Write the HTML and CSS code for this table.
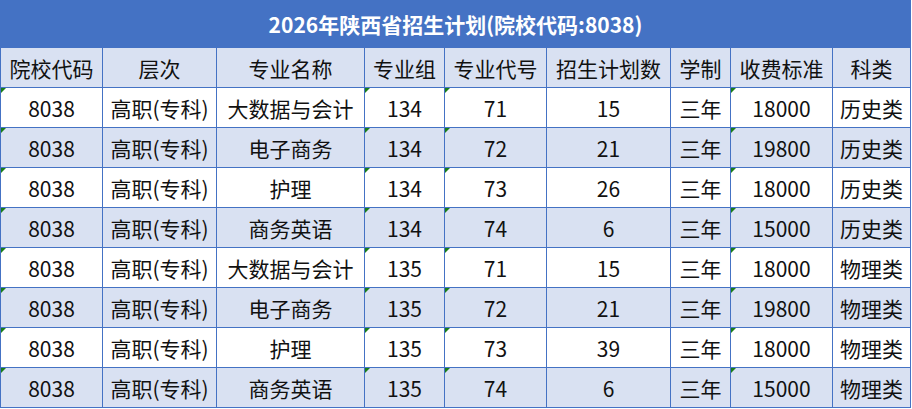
FILE: index.html
```html
<!DOCTYPE html>
<html lang="zh-CN">
<head>
<meta charset="utf-8">
<title>2026年陕西省招生计划</title>
<link rel="stylesheet" href="styles.css">
</head>
<body>
<table class="plan">
  <colgroup>
    <col class="c1"><col class="c2"><col class="c3"><col class="c4"><col class="c5"><col class="c6"><col class="c7"><col class="c8"><col class="c9">
  </colgroup>
  <tr class="title"><td colspan="9">2026年陕西省招生计划(院校代码:8038)</td></tr>
  <tr class="head">
    <td>院校代码</td><td>层次</td><td>专业名称</td><td>专业组</td><td>专业代号</td><td>招生计划数</td><td>学制</td><td>收费标准</td><td>科类</td>
  </tr>
  <tr><td class="t">8038</td><td>高职(专科)</td><td>大数据与会计</td><td class="t">134</td><td class="t">71</td><td>15</td><td>三年</td><td class="t">18000</td><td>历史类</td></tr>
  <tr class="alt"><td class="t">8038</td><td>高职(专科)</td><td>电子商务</td><td class="t">134</td><td class="t">72</td><td>21</td><td>三年</td><td class="t">19800</td><td>历史类</td></tr>
  <tr><td class="t">8038</td><td>高职(专科)</td><td>护理</td><td class="t">134</td><td class="t">73</td><td>26</td><td>三年</td><td class="t">18000</td><td>历史类</td></tr>
  <tr class="alt"><td class="t">8038</td><td>高职(专科)</td><td>商务英语</td><td class="t">134</td><td class="t">74</td><td>6</td><td>三年</td><td class="t">15000</td><td>历史类</td></tr>
  <tr><td class="t">8038</td><td>高职(专科)</td><td>大数据与会计</td><td class="t">135</td><td class="t">71</td><td>15</td><td>三年</td><td class="t">18000</td><td>物理类</td></tr>
  <tr class="alt"><td class="t">8038</td><td>高职(专科)</td><td>电子商务</td><td class="t">135</td><td class="t">72</td><td>21</td><td>三年</td><td class="t">19800</td><td>物理类</td></tr>
  <tr><td class="t">8038</td><td>高职(专科)</td><td>护理</td><td class="t">135</td><td class="t">73</td><td>39</td><td>三年</td><td class="t">18000</td><td>物理类</td></tr>
  <tr class="alt"><td class="t">8038</td><td>高职(专科)</td><td>商务英语</td><td class="t">135</td><td class="t">74</td><td>6</td><td>三年</td><td class="t">15000</td><td>物理类</td></tr>
</table>
</body>
</html>
```

FILE: styles.css
```css
html, body {
  margin: 0;
  padding: 0;
  background: #ffffff;
}

body {
  font-family: "Noto Sans CJK SC", "Noto Sans", sans-serif;
  color: #111111;
}

.plan {
  border-collapse: collapse;
  table-layout: fixed;
  width: 911px;
}

.c1 { width: 102px; }
.c2 { width: 114px; }
.c3 { width: 148px; }
.c4 { width: 80px; }
.c5 { width: 102px; }
.c6 { width: 124px; }
.c7 { width: 60px; }
.c8 { width: 102px; }
.c9 { width: 78px; }

.plan td {
  border: 1px solid #4472c4;
  text-align: center;
  vertical-align: middle;
  font-size: 21px;
  line-height: 24px;
  height: 39px;
  padding: 0;
  white-space: nowrap;
  position: relative;
}

.plan .title td {
  background: #4472c4;
  color: #ffffff;
  font-weight: bold;
  font-size: 21px;
  height: 47px;
  border-top: none;
  border-left-color: #4472c4;
  padding-right: 0;
}

.plan .head td,
.plan .alt td {
  background: #d9e1f2;
}

.plan td.t::before {
  content: "";
  position: absolute;
  left: 0;
  top: 0;
  width: 0;
  height: 0;
  border-top: 5px solid #1a7d1a;
  border-right: 5px solid transparent;
}
```
